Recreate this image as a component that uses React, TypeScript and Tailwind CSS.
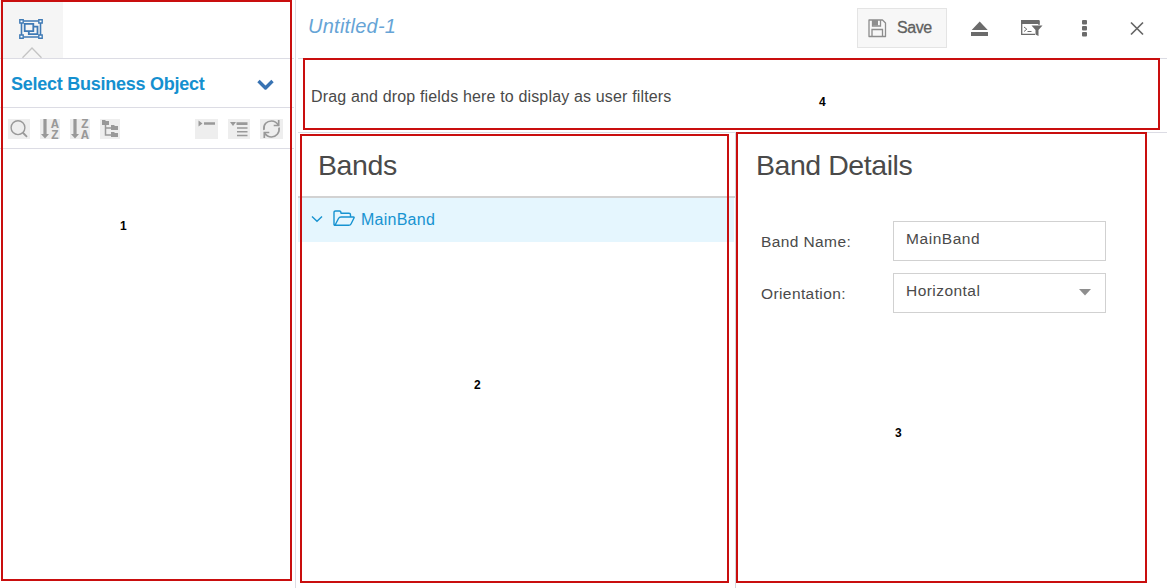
import type { ReactNode } from "react";

function ToolButton({ className = "", children }: { className?: string; children: ReactNode }) {
  return (
    <button className={`h-5 shrink-0 bg-[#eeeeee] text-[#999999] ${className}`}>{children}</button>
  );
}

function SortIcon({ first, second }: { first: string; second: string }) {
  return (
    <svg viewBox="0 0 20 20" className="block h-5 w-5 overflow-visible" fill="currentColor">
      <path d="M3.400 0h3.200v15H9l-4 4.600L1 15h2.400z" />
      <g fontFamily="Liberation Mono, monospace" fontSize="13" fontWeight="bold" textAnchor="middle">
        <text x="15" y="8.600">{first}</text>
        <text x="15" y="19.600">{second}</text>
      </g>
    </svg>
  );
}

function Sidebar() {
  return (
    <aside className="flex w-[294px] shrink-0 flex-col">
      <div className="flex h-[59px] border-b border-[#dcdce4]">
        <button className="flex h-[58px] w-[63px] flex-col items-center bg-[#f5f5f5] pt-[19px]">
          <svg width="24" height="20" viewBox="0 0 24 20" className="-ml-px shrink-0" fill="none" stroke="#3f7ab5" strokeWidth="1.400">
            <path d="M4.500 2h15M4.500 18h15M2.500 4v12M21.500 4v12" strokeWidth="1.600" />
            <path d="M.8.7h3.400v3.300H.8zM19.800.7h3.400v3.300h-3.400zM.8 16h3.400v3.300H.8zM19.800 16h3.400v3.300h-3.400z" fill="#fff" />
            <path d="M5.700 4.800h8.600v7.400H5.700zM14.500 7.600h4v7.600h-8.700v-3" strokeWidth="1.800" />
          </svg>
          <svg width="22" height="11" viewBox="0 0 22 11" className="mt-2 shrink-0" fill="none" stroke="#c4c4c4" strokeWidth="1.300">
            <path d="M1.500 10.800 11 1l9.500 9.800" />
          </svg>
        </button>
      </div>
      <div className="flex h-[49px] items-center border-b border-[#dcdce4] pl-[11px]">
        <span className="mt-[2px] w-[246px] whitespace-nowrap text-[18px] font-bold tracking-[-0.260px] text-[#1590cf]">Select Business Object</span>
        <svg width="17" height="12" viewBox="0 0 17 12" fill="none" stroke="#3873b3" strokeWidth="3.400" strokeLinejoin="round" className="mt-[3px]">
          <path d="m1.500 2 7 7 7-7" />
        </svg>
      </div>
      <div className="flex h-[41px] items-center border-b border-[#dcdce4] pl-2 pt-[2px]">
        <ToolButton className="mr-[10px] w-[22px]">
          <svg width="22" height="20" viewBox="0 0 22 20" fill="none" stroke="currentColor" strokeWidth="1.400">
            <circle cx="10" cy="8.700" r="6.900" />
            <path d="m14.700 13.500 4.300 4.300" strokeWidth="1.800" />
          </svg>
        </ToolButton>
        <ToolButton className="mr-[10px] w-5"><SortIcon first="A" second="Z" /></ToolButton>
        <ToolButton className="mr-[10px] w-5"><SortIcon first="Z" second="A" /></ToolButton>
        <ToolButton className="mr-[75px] w-5">
          <svg width="20" height="20" viewBox="0 0 20 20" fill="currentColor">
            <path d="M2 1h3l1 1h3v4H2zM11 6h3l1 1h3v4h-7zM11 13h3l1 1h3v4h-7z" />
            <path d="M5.500 6v10H11M5.500 9H11" fill="none" stroke="currentColor" strokeWidth="1.500" />
          </svg>
        </ToolButton>
        <ToolButton className="mr-[10px] w-[23px]">
          <svg width="23" height="20" viewBox="0 0 23 20" fill="currentColor">
            <path d="m3.500 1.500 4 3-4 3zM9 3.200h11v2.600H9z" />
          </svg>
        </ToolButton>
        <ToolButton className="mr-[10px] w-[22px]">
          <svg width="22" height="20" viewBox="0 0 22 20" fill="currentColor">
            <path d="M2 3h6L5 7zM8.500 3.300h11v2.600h-11zM9 8.200h10.500v1.500H9zM9 12h10.500v1.500H9zM9 15.800h10.500v1.500H9z" />
          </svg>
        </ToolButton>
        <ToolButton className="w-[23px]">
          <svg width="23" height="20" viewBox="0 0 23 20" fill="none" stroke="currentColor" strokeWidth="1.700">
            <path d="M4 11C3 5 7 2 11.500 2c3.500 0 5.500 1.800 7 4.500M19 8.500c1 5.500-3 9.500-7.500 9.500-3.500 0-5.500-1.800-7-4" />
            <path d="M18.700 1v5.500h-5M4.300 19v-5.500h5" />
          </svg>
        </ToolButton>
      </div>
    </aside>
  );
}

function Header() {
  return (
    <header className="flex h-[59px] items-start border-b border-[#dcdce4] pl-[10px]">
      <h1 className="mt-3 w-[549px] text-[20px] italic leading-7 tracking-[0.260px] text-[#66a4d6]">Untitled-1</h1>
      <button className="mt-2 flex h-10 w-[90px] items-center border border-[#e4e4e4] bg-[#f7f7f7] pl-[10px] text-[#606060]">
        <svg width="19" height="19" viewBox="0 0 19 19" fill="none" stroke="#8d8d8d" strokeWidth="1.300">
          <path d="M1 1h13.500L17.500 4v13.500H1z" strokeLinejoin="round" />
          <path d="M4.500 1v6h8V1M4 17.500v-7h10.500v7" />
          <path d="M5 1h5v5.500H5z" fill="#8d8d8d" stroke="none" />
        </svg>
        <span className="ml-[10px] text-[16px] tracking-[-0.400px] [-webkit-text-stroke:0.300px_currentColor]">Save</span>
      </button>
      <button className="ml-6 mt-[21px]" aria-label="Eject">
        <svg width="18" height="16" viewBox="0 0 18 16" fill="#6b6b6b"><path d="M8.700.5 16.700 9h-16zM0 11h17v4H0z" /></svg>
      </button>
      <button className="ml-8 mt-[19px]" aria-label="Filter script">
        <svg width="23" height="18" viewBox="0 0 23 18" fill="none" stroke="#6b6b6b">
          <path d="M0 1h18.500v4H0z" fill="#6b6b6b" stroke="none" />
          <path d="M.7 2v13.300H14M18 2v4" strokeWidth="1.300" />
          <path d="m3 8 2.800 2.200L3 12.500M6.500 12.500h4" />
          <path d="M10.500 6.500h11l-4 4.500v6l-3-1.500V11z" fill="#6b6b6b" stroke="none" />
        </svg>
      </button>
      <button className="ml-[38px] mt-5" aria-label="More">
        <svg width="5" height="17" viewBox="0 0 5 17" fill="#6b6b6b">
          <rect width="5" height="4.400" rx="1" /><rect y="6" width="5" height="4.400" rx="1" /><rect y="12" width="5" height="4.400" rx="1" />
        </svg>
      </button>
      <button className="ml-[43px] mt-[21px]" aria-label="Close">
        <svg width="14" height="15" viewBox="0 0 14 15" stroke="#666" strokeWidth="1.700"><path d="m1 1.500 12 12M13 1.500l-12 12" /></svg>
      </button>
    </header>
  );
}

function BandsPanel() {
  return (
    <section className="w-[437px] shrink-0">
      <div className="h-[65px] border-b-2 border-[#d2d2d2] pl-5 pt-3">
        <h2 className="text-[28.500px] leading-10 tracking-[-0.400px] text-[#4a4a4a]">Bands</h2>
      </div>
      <div className="flex h-11 w-[436px] items-center bg-[#e5f6fe] pl-[13px] text-[#1793d1]">
        <svg width="12" height="8" viewBox="0 0 12 8" fill="none" stroke="currentColor" strokeWidth="1.400" className="mb-[3px]"><path d="m1 1.500 5 4.800 5-4.800" /></svg>
        <svg width="23" height="17" viewBox="0 0 23 17" fill="none" stroke="currentColor" strokeWidth="1.400" strokeLinejoin="round" className="mb-[4px] ml-[10px]">
          <path d="M2 15.300c-.7 0-1-.5-1-1V2.500C1 1.500 1.600 1 2.500 1h4C7.500 1 8 2 8 3.300h8c1 0 1.500.6 1.500 1.500v2M2 15.300 5.500 8.500c.5-1 1.300-1.500 2.500-1.500h12.500c.7 0 .8.500.5 1l-3 6c-.5 1-1.300 1.300-2.300 1.300z" />
        </svg>
        <span className="ml-[5px] text-[16px] tracking-[0.250px]">MainBand</span>
      </div>
    </section>
  );
}

function BandDetails() {
  return (
    <section className="grow border-l border-[#d5d5db] pl-5 pt-3 text-[#4a4a4a]">
      <h2 className="text-[28.500px] leading-10 tracking-[-0.450px]">Band Details</h2>
      <div className="mt-9 flex h-10">
        <label className="w-[137px] pl-[5px] text-[15.500px] leading-[42px] tracking-[0.400px]">Band Name:</label>
        <div className="h-10 w-[213px] border border-[#d1d1d1] pl-3 text-[15.500px] leading-[34px] tracking-[0.550px]">MainBand</div>
      </div>
      <div className="mt-3 flex h-10">
        <label className="w-[137px] pl-[5px] text-[15.500px] leading-[42px] tracking-[0.400px]">Orientation:</label>
        <button className="flex h-10 w-[213px] items-center border border-[#d1d1d1] pl-3 text-left text-[15.500px] leading-[35px] tracking-[0.450px]">
          <span className="mb-[5px] w-[173px]">Horizontal</span>
          <svg width="12" height="7" viewBox="0 0 12 7" fill="#8e8e8e" className="mb-px"><path d="M0 0h12L6 6.500z" /></svg>
        </button>
      </div>
    </section>
  );
}

export default function App() {
  return (
    <div className="relative flex h-[588px] w-[1167px] overflow-hidden bg-white font-['Liberation_Sans',Arial,sans-serif]">
      <Sidebar />
      <div className="ml-px w-px shrink-0 bg-[#dddde3]" />
      <main className="ml-[2px] flex min-w-0 grow flex-col">
        <Header />
        <div className="flex h-[74px] items-center border-b border-[#dcdce4] pl-[13px]">
          <p className="mt-[2px] whitespace-nowrap text-[16px] tracking-[0.160px] text-[#4a4a4a]">Drag and drop fields here to display as user filters</p>
        </div>
        <div className="flex grow">
          <BandsPanel />
          <BandDetails />
        </div>
      </main>

      <div className="absolute left-px top-0 h-[581px] w-[291px] border-2 border-[#c90e0e]">
        <b className="absolute left-[117px] top-[216px] text-[12px] leading-4 text-black">1</b>
      </div>
      <div className="absolute left-[300px] top-[134px] h-[449px] w-[429px] border-2 border-[#c90e0e]">
        <b className="absolute left-[172px] top-[241px] text-[12px] leading-4 text-black">2</b>
      </div>
      <div className="absolute left-[736px] top-[132px] h-[451px] w-[411px] border-2 border-[#c90e0e]">
        <b className="absolute left-[157px] top-[291px] text-[12px] leading-4 text-black">3</b>
      </div>
      <div className="absolute left-[303px] top-[58px] h-[72px] w-[857px] border-2 border-[#c90e0e]">
        <b className="absolute left-[514px] top-[34px] text-[12px] leading-4 text-black">4</b>
      </div>
    </div>
  );
}
